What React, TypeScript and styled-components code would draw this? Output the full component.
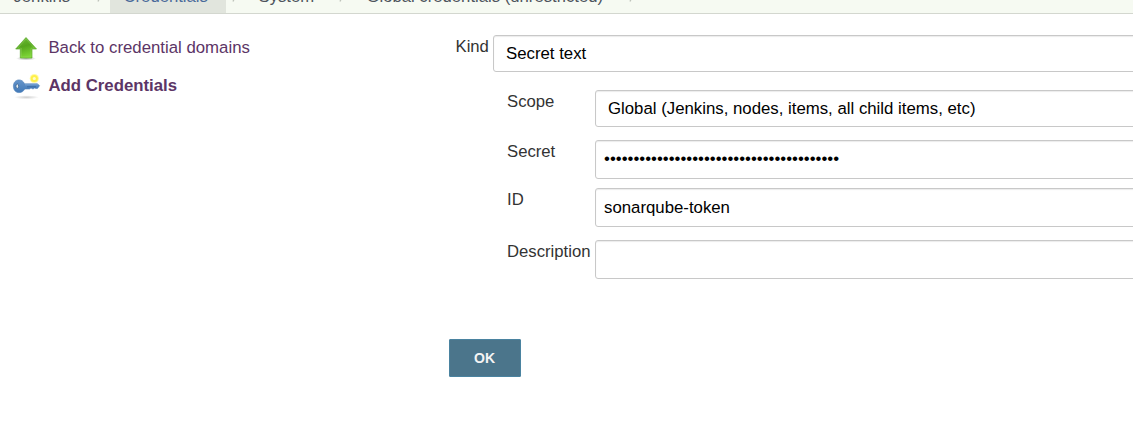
import React from 'react';
import styled, { createGlobalStyle } from 'styled-components';

const Global = createGlobalStyle`
  * { box-sizing: border-box; }
  html, body { margin: 0; overflow: hidden; background: #fff; }
  body { font-family: "Liberation Sans", Arial, sans-serif; font-size: 16.8px; color: #333; }
`;

const Page = styled.div`
  width: 1133px;
  height: 424px;
  overflow: hidden;
`;

const Breadcrumbs = styled.nav`
  display: flex;
  align-items: flex-end;
  height: 14px;
  overflow: hidden;
  background: #f6faf2;
  border-bottom: 1px solid #d3d7cf;
`;

const Crumb = styled.a<{ $width: number; $active?: boolean }>`
  flex: none;
  width: ${p => p.$width}px;
  height: 34px;
  padding: 8px 0 0 13.5px;
  font-size: 16.7px;
  line-height: 20px;
  white-space: nowrap;
  color: ${p => (p.$active ? '#4a6a9a' : '#4d545d')};
  background: ${p => (p.$active ? '#e1e5dd' : 'transparent')};
`;

const Divider = styled.svg<{ $width: number }>`
  flex: none;
  width: ${p => p.$width}px;
  height: 13px;
`;

const Body = styled.main`
  display: flex;
`;

const SidePanel = styled.aside`
  flex: none;
  width: 449px;
  padding: 15px 0 0 12px;
`;

const Task = styled.a<{ $bold?: boolean }>`
  display: flex;
  align-items: center;
  height: 38px;
  gap: 7.4px;
  color: #5c3566;
  font-weight: ${p => (p.$bold ? 700 : 400)};
  white-space: nowrap;

  svg { flex: none; margin-top: 2px; }
`;

const Form = styled.form`
  flex: none;
  width: 700px;
  padding-top: 21px;
`;

const Row = styled.div<{ $indent: number; $labelWidth: number; $gap: number }>`
  display: grid;
  grid-template-columns: ${p => p.$labelWidth}px 1fr;
  margin-bottom: ${p => p.$gap}px;
  padding-left: ${p => p.$indent}px;
`;

const Label = styled.label`
  padding-top: 2px;
  font-size: 16.7px;
  line-height: 20px;
  white-space: nowrap;
`;

const Field = styled.input<{ $select?: boolean }>`
  width: 100%;
  height: ${p => (p.$select ? 37 : 39)}px;
  padding: ${p => (p.$select ? '0 12px' : '0 8px')};
  border: 1px solid #c8c8c8;
  border-radius: 3px;
  outline: 0;
  background: #fff;
  box-shadow: inset 0 1px 1px rgba(0, 0, 0, 0.08);
  color: #000;
  font: inherit;
`;

const SecretField = styled(Field)`
  padding-bottom: 1px;
`;

const Submit = styled.button`
  display: block;
  width: 72px;
  height: 38px;
  margin-top: 60px;
  padding: 0 1px 0 0;
  border: 1px solid #4a83a0;
  border-radius: 1px;
  background: #4b758b;
  color: #f4f4f4;
  font: 700 14px "Liberation Sans", Arial, sans-serif;
`;

const Separator = ({ width, at }: { width: number; at: number }) => (
  <Divider $width={width} viewBox={`0 0 ${width} 13`}>
    <path d={`M${at + 2} -3 L${at} 1.5`} stroke="#bfc4bb" strokeWidth="1.3" fill="none" />
  </Divider>
);

const UpArrow = () => (
  <svg width="29" height="28" viewBox="0 0 29 28">
    <defs>
      <linearGradient id="leaf" x1="0" y1="0" x2="0.3" y2="1">
        <stop offset="0" stopColor="#6fbc3a" />
        <stop offset="0.5" stopColor="#55a51d" />
        <stop offset="1" stopColor="#7cd435" />
      </linearGradient>
      <radialGradient id="ground">
        <stop offset="0" stopColor="#777" stopOpacity="0.6" />
        <stop offset="1" stopColor="#777" stopOpacity="0" />
      </radialGradient>
    </defs>
    <ellipse cx="14" cy="23.5" rx="10" ry="2" fill="url(#ground)" />
    <path d="M14 2.5 L24.5 14 H20 V23 H8.3 V14 H3.7 Z" fill="url(#leaf)" stroke="#62ad32" strokeWidth="0.7" strokeLinejoin="round" />
    <path d="M14 4 L22.4 13.2 H19 V22 H9.3 V13.2 H5.8 Z" fill="none" stroke="#a0de71" strokeOpacity="0.5" strokeWidth="0.7" />
  </svg>
);

const NewKey = () => (
  <svg width="29" height="28" viewBox="0 0 29 28">
    <defs>
      <linearGradient id="steel" x1="0" y1="0" x2="0" y2="1">
        <stop offset="0" stopColor="#6594ca" />
        <stop offset="1" stopColor="#4279b7" />
      </linearGradient>
      <radialGradient id="shade">
        <stop offset="0" stopColor="#777" stopOpacity="0.35" />
        <stop offset="1" stopColor="#777" stopOpacity="0" />
      </radialGradient>
    </defs>
    <ellipse cx="14.5" cy="24.3" rx="12.5" ry="2" fill="url(#shade)" />
    <path d="M12.5 10.8 H25.5 L27.5 12.8 L25.5 15.4 H24 L22.5 15 L21 16 L19 15 L17.5 16 H12.8 C11.4 18.5 9.5 19.6 6.9 19.6 C3.6 19.6 1.4 17 1.4 13.1 C1.4 9.4 3.8 6.9 7 6.9 C9.6 6.9 11.5 8.3 12.5 10.8 Z" fill="url(#steel)" stroke="#4d7fb8" strokeWidth="0.6" />
    <path d="M13 11.8 H26" stroke="#8db1dd" strokeWidth="0.7" />
    <path d="M15 13.8 H24" stroke="#315f97" strokeWidth="0.7" />
    <ellipse cx="5.3" cy="13.2" rx="1.4" ry="2.2" fill="#e5ecef" stroke="#345f91" strokeWidth="0.8" />
    <circle cx="22.3" cy="5.5" r="4.6" fill="#fff66a" fillOpacity="0.6" />
    <circle cx="22.3" cy="5.5" r="2.6" fill="#fffcc8" stroke="#fff04a" strokeWidth="2" />
  </svg>
);

export default function App() {
  return (
    <Page>
      <Global />
      <Breadcrumbs>
        <Crumb $width={84}>Jenkins</Crumb>
        <Separator width={26} at={14} />
        <Crumb $width={116} $active>Credentials</Crumb>
        <Separator width={19} at={7} />
        <Crumb $width={83}>System</Crumb>
        <Separator width={25} at={12} />
        <Crumb $width={265}>Global credentials (unrestricted)</Crumb>
        <Separator width={25} at={12} />
      </Breadcrumbs>
      <Body>
        <SidePanel>
          <Task><UpArrow />Back to credential domains</Task>
          <Task $bold><NewKey />Add Credentials</Task>
        </SidePanel>
        <Form onSubmit={e => e.preventDefault()}>
          <Row $indent={6.5} $labelWidth={37.5} $gap={18}>
            <Label>Kind</Label>
            <Field $select readOnly value="Secret text" />
          </Row>
          <Row $indent={58} $labelWidth={88} $gap={13}>
            <Label>Scope</Label>
            <Field $select readOnly value="Global (Jenkins, nodes, items, all child items, etc)" />
          </Row>
          <Row $indent={58} $labelWidth={88} $gap={9}>
            <Label>Secret</Label>
            <SecretField type="text" readOnly value={'•'.repeat(40)} />
          </Row>
          <Row $indent={58} $labelWidth={88} $gap={13}>
            <Label>ID</Label>
            <Field readOnly value="sonarqube-token" />
          </Row>
          <Row $indent={58} $labelWidth={88} $gap={0}>
            <Label>Description</Label>
            <Field readOnly value="" />
          </Row>
          <Submit type="submit">OK</Submit>
        </Form>
      </Body>
    </Page>
  );
}
